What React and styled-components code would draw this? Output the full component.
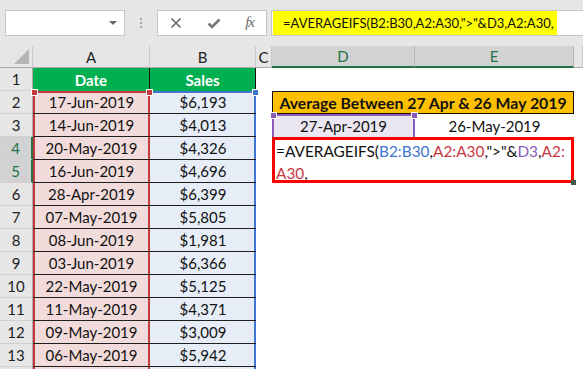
import styled, { createGlobalStyle, css } from 'styled-components';

const GlobalStyle = createGlobalStyle`
  html, body {
    margin: 0;
    padding: 0;
    background: #ffffff;
    overflow: hidden;
  }
  body {
    font-family: Lato, "Liberation Sans", sans-serif;
  }
`;

const RED = '#c8383f';
const BLUE = '#3f76d0';
const PURPLE = '#8a5cb8';
const GREEN = '#217346';

const Window = styled.div`
  width: 583px;
  height: 369px;
  overflow: hidden;
  background: #ffffff;
`;

const Toolbar = styled.div`
  height: 46px;
  background: #e6e6e6;
  display: flex;
  align-items: center;
  padding-left: 5px;
  box-sizing: border-box;
`;

const NameBox = styled.div`
  flex: 0 0 120px;
  height: 26px;
  box-sizing: border-box;
  background: #fff;
  border: 1px solid #c6c6c6;
  display: flex;
  align-items: center;
  justify-content: flex-end;
  padding-right: 7px;
`;

const Caret = styled.div`
  width: 0;
  height: 0;
  border-left: 4px solid transparent;
  border-right: 4px solid transparent;
  border-top: 4px solid #6a6a6a;
`;

const Grip = styled.div`
  flex: 0 0 auto;
  display: flex;
  flex-direction: column;
  gap: 2px;
  margin: 0 15px 0 15px;

  span {
    width: 2px;
    height: 2px;
    background: #a8a8a8;
  }
`;

const FxButtons = styled.div`
  flex: 0 0 110px;
  height: 26px;
  box-sizing: border-box;
  background: #fff;
  border: 1px solid #c6c6c6;
  display: flex;
  align-items: center;
  justify-content: space-between;
  padding: 0 12px 0 12px;
`;

const FxLabel = styled.span`
  font-family: "Liberation Serif", serif;
  font-style: italic;
  font-size: 15px;
  color: #6a6a6a;
  letter-spacing: -1px;
  margin-top: -2px;
`;

const FormulaBar = styled.div`
  flex: 1;
  min-width: 0;
  overflow: hidden;
  height: 26px;
  margin-left: 4px;
  box-sizing: border-box;
  background: #fff;
  border: 1px solid #c6c6c6;
  border-right: none;
  display: flex;
  align-items: stretch;
`;

const Highlight = styled.span`
  background: #ffff00;
  margin: -1px 0 -1px 1px;
  padding: 0 3px 0 10px;
  font-size: 13px;
  line-height: 26px;
  color: #111;
  white-space: nowrap;
`;

const Sheet = styled.div`
  display: grid;
  grid-template-columns: 33px 117px 106px 16px 143px 159px 1fr;
  grid-template-rows: 22px repeat(14, 23px);
  font-size: 15px;
  color: #111;
`;

const Corner = styled.div`
  background: #e6e6e6;
  border-right: 1px solid #c8c8c8;
  border-bottom: 1px solid #ababab;
  box-sizing: border-box;
  display: flex;
  align-items: flex-end;
  justify-content: flex-end;
  padding: 0 3px 3px 0;

  &::after {
    content: '';
    width: 0;
    height: 0;
    border-left: 15px solid transparent;
    border-bottom: 15px solid #b4b4b4;
  }
`;

const ColHeader = styled.div`
  background: ${(p) => (p.$selected ? '#d2d2d2' : '#e6e6e6')};
  color: ${(p) => (p.$selected ? GREEN : '#222')};
  border-right: 1px solid ${(p) => (p.$selected ? '#b8b8b8' : '#c8c8c8')};
  border-bottom: ${(p) => (p.$selected ? `2px solid ${GREEN}` : '1px solid #ababab')};
  box-sizing: border-box;
  display: flex;
  align-items: center;
  justify-content: center;
  font-size: 15px;
`;

const RowHeader = styled.div`
  background: ${(p) => (p.$selected ? '#d2d2d2' : '#e6e6e6')};
  color: ${(p) => (p.$selected ? GREEN : '#222')};
  border-right: ${(p) => (p.$selected ? `2px solid ${GREEN}` : '1px solid #ababab')};
  border-bottom: 1px solid #d0d0d0;
  box-sizing: border-box;
  display: flex;
  align-items: center;
  justify-content: center;
  font-size: 15px;
`;

const Cell = styled.div`
  position: relative;
  box-sizing: border-box;
  display: flex;
  align-items: center;
  justify-content: center;
  white-space: nowrap;
  background: ${(p) => p.$bg || '#fff'};
`;

const TitleCell = styled(Cell)`
  background: #00b050;
  color: #fff;
  font-weight: 700;
  border-right: 1px solid #111;
`;

const rangeEdges = (color, first, noLeft) => css`
  box-shadow: ${noLeft ? '' : `inset 2px 0 0 ${color},`} inset -2px 0 0 ${color}
    ${first ? `, inset 0 2px 0 ${color}` : ''};
`;

const DataCell = styled(Cell)`
  border-bottom: 1px solid #1e1e1e;
  ${(p) => p.$ref && rangeEdges(p.$ref, p.$first, p.$noLeft)}
`;

const Handle = styled.span`
  position: absolute;
  top: -2px;
  ${(p) => (p.$side === 'left' ? 'left: -2px;' : 'right: -3px;')}
  width: 5px;
  height: 5px;
  background: ${(p) => p.$color};
  border: 1px solid #fff;
  z-index: 3;
`;

const MergedTitle = styled(Cell)`
  grid-column: span 2;
  background: #ffc000;
  border: 1px solid #111;
  font-weight: 700;
  font-size: 15.8px;
`;

const DateInput = styled(Cell)`
  ${(p) => p.$ref && css`
    box-shadow: inset 2px 0 0 ${p.$ref}, inset -2px 0 0 ${p.$ref}, inset 0 2px 0 ${p.$ref};
  `}
`;

const EditCell = styled.div`
  grid-column: 5 / 7;
  grid-row: 5 / 7;
  position: relative;
  box-sizing: border-box;
  border: 3px solid #ff0000;
  background: #fff;
  padding: 0 0 0 1px;
  font-size: 15.4px;
  line-height: 22px;
  white-space: nowrap;
  color: #111;
  z-index: 2;

  &::after {
    content: '';
    position: absolute;
    right: -5px;
    bottom: -5px;
    width: 5px;
    height: 5px;
    background: #3d5a4a;
  }
`;

const Ref = styled.span`
  color: ${(p) => p.$color};
`;

const FillerCell = styled.div`
  background: #fff;
`;

const dates = [
  ['17-Jun-2019', '$6,193'],
  ['14-Jun-2019', '$4,013'],
  ['20-May-2019', '$4,326'],
  ['16-Jun-2019', '$4,696'],
  ['28-Apr-2019', '$6,399'],
  ['07-May-2019', '$5,805'],
  ['08-Jun-2019', '$1,981'],
  ['03-Jun-2019', '$6,366'],
  ['22-May-2019', '$5,125'],
  ['11-May-2019', '$4,371'],
  ['09-May-2019', '$3,009'],
  ['06-May-2019', '$5,942'],
  ['', ''],
];

const XIcon = () => (
  <svg width="12" height="12" viewBox="0 0 12 12">
    <path d="M1.5 1.5 L10.5 10.5 M10.5 1.5 L1.5 10.5" stroke="#666" strokeWidth="1.6" />
  </svg>
);

const CheckIcon = () => (
  <svg width="14" height="11" viewBox="0 0 14 11">
    <path d="M1.5 5.5 L5 9 L12.5 1.5" stroke="#777" strokeWidth="2.6" fill="none" />
  </svg>
);

const sideCells = (row) => {
  if (row === 2) {
    return [
      <FillerCell key="c" />,
      <MergedTitle key="de">Average Between 27 Apr &amp; 26 May 2019</MergedTitle>,
    ];
  }
  if (row === 3) {
    return [
      <FillerCell key="c" />,
      <DateInput key="d" $bg="#ebe7f2" $ref={PURPLE}>
        <Handle $side="left" $color={PURPLE} />
        27-Apr-2019
        <Handle $side="right" $color={PURPLE} />
      </DateInput>,
      <Cell key="e">26-May-2019</Cell>,
    ];
  }
  if (row === 4 || row === 5) {
    return [<FillerCell key="c" />];
  }
  return [<FillerCell key="c" />, <FillerCell key="d" />, <FillerCell key="e" />];
};

const App = () => {
  return (
    <Window>
      <GlobalStyle />
      <Toolbar>
        <NameBox>
          <Caret />
        </NameBox>
        <Grip>
          <span />
          <span />
          <span />
        </Grip>
        <FxButtons>
          <XIcon />
          <CheckIcon />
          <FxLabel>fx</FxLabel>
        </FxButtons>
        <FormulaBar>
          <Highlight>=AVERAGEIFS(B2:B30,A2:A30,"&gt;"&amp;D3,A2:A30,</Highlight>
        </FormulaBar>
      </Toolbar>
      <Sheet>
        <Corner />
        <ColHeader>A</ColHeader>
        <ColHeader>B</ColHeader>
        <ColHeader>C</ColHeader>
        <ColHeader $selected>D</ColHeader>
        <ColHeader $selected>E</ColHeader>
        <ColHeader />

        <RowHeader>1</RowHeader>
        <TitleCell>Date</TitleCell>
        <TitleCell>Sales</TitleCell>
        <FillerCell />
        <FillerCell />
        <FillerCell />
        <FillerCell />

        <EditCell>
          =AVERAGEIFS(<Ref $color={BLUE}>B2:B30</Ref>,<Ref $color={RED}>A2:A30</Ref>,"&gt;"&amp;
          <Ref $color={PURPLE}>D3</Ref>,<Ref $color={RED}>A2:</Ref>
          <br />
          <Ref $color={RED}>A30</Ref>,
        </EditCell>

        {dates.map(([date, sales], i) => {
          const row = i + 2;
          const first = row === 2;
          return [
            <RowHeader key={`h${row}`} $selected={row === 4 || row === 5}>
              {row < 14 ? row : ''}
            </RowHeader>,
            <DataCell key={`a${row}`} $bg="#f2dcdb" $ref={RED} $first={first}>
              {first && <Handle $side="left" $color={RED} />}
              {date}
              {first && <Handle $side="right" $color={RED} />}
            </DataCell>,
            <DataCell key={`b${row}`} $bg="#e6edf7" $ref={BLUE} $first={first} $noLeft>
              {sales}
              {first && <Handle $side="right" $color={BLUE} />}
            </DataCell>,
            ...sideCells(row),
            <FillerCell key={`f${row}`} />,
          ];
        })}
      </Sheet>
    </Window>
  );
};

export default App;
